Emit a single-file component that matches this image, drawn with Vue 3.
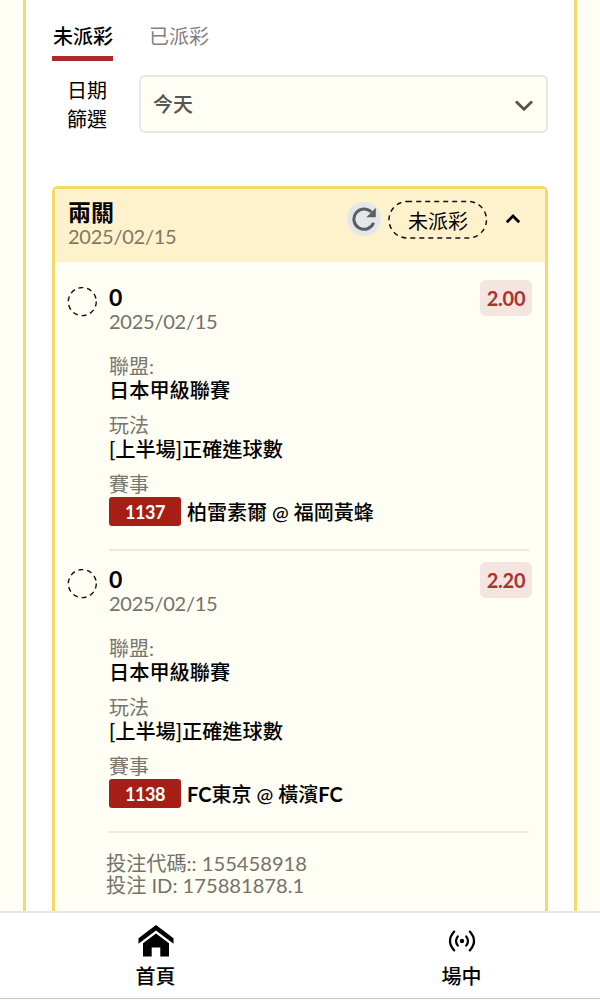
<script setup>
import { ref } from 'vue'

const tabs = ['未派彩', '已派彩']
const activeTab = ref(0)
const expanded = ref(true)

const bets = [
  {
    id: '1137',
    score: '0',
    date: '2025/02/15',
    league: '日本甲級聯賽',
    play: '[上半場]正確進球數',
    match: '柏雷素爾 @ 福岡黃蜂',
    odds: '2.00'
  },
  {
    id: '1138',
    score: '0',
    date: '2025/02/15',
    league: '日本甲級聯賽',
    play: '[上半場]正確進球數',
    match: 'FC東京 @ 橫濱FC',
    odds: '2.20'
  }
]

// odd entries are the latin runs, which need a heavier weight than the CJK text
function splitLatin(text) {
  return text.split(/([A-Z]+)/)
}
</script>

<template>
  <div class="page">
    <main class="content">
      <div class="panel">
        <div class="tabs">
          <button
            v-for="(tab, i) in tabs"
            :key="tab"
            class="tab"
            :class="{ active: activeTab === i }"
            @click="activeTab = i"
          >
            {{ tab }}
          </button>
        </div>

        <div class="filter">
          <div class="filter-label">日期<br />篩選</div>
          <div class="select">
            <span>今天</span>
            <svg width="18" height="12" viewBox="0 0 18 12">
              <path d="M1.8 2.2L9 9.2L16.2 2.2" />
            </svg>
          </div>
        </div>

        <section class="card">
          <header class="card-header">
            <div class="card-heading">
              <div class="card-title">兩關</div>
              <div class="date">2025/02/15</div>
            </div>
            <div class="refresh">
              <svg width="24" height="24" viewBox="0 0 24 24">
                <path class="arc" d="M21.6 15.8A10.2 10.2 0 1 1 19.4 5" />
                <path class="head" d="M23.8 0.8V10.2H14.4Z" />
              </svg>
            </div>
            <div class="status">
              <svg class="status-outline" width="100" height="40" viewBox="0 0 100 40">
                <rect x="1" y="1.5" width="97.5" height="36.5" rx="18.2" />
              </svg>
              <span>未派彩</span>
            </div>
            <button class="toggle" @click="expanded = !expanded">
              <svg width="16" height="12" viewBox="0 0 16 12">
                <path d="M1.8 9.3L8 3L14.2 9.3" />
              </svg>
            </button>
          </header>

          <div v-if="expanded" class="card-body">
            <div v-for="bet in bets" :key="bet.id" class="bet">
              <svg class="circle" width="30" height="30" viewBox="0 0 30 30">
                <circle cx="15.3" cy="14.6" r="14" />
              </svg>
              <div class="bet-info">
                <div class="score">{{ bet.score }}</div>
                <div class="date">{{ bet.date }}</div>
                <dl>
                  <dt>聯盟:</dt>
                  <dd>{{ bet.league }}</dd>
                  <dt>玩法</dt>
                  <dd>{{ bet.play }}</dd>
                  <dt>賽事</dt>
                  <dd class="match">
                    <span class="match-id">{{ bet.id }}</span>
                    <span class="match-name"
                      ><span
                        v-for="(part, i) in splitLatin(bet.match)"
                        :key="i"
                        :class="{ latin: i % 2 }"
                        >{{ part }}</span
                      ></span
                    >
                  </dd>
                </dl>
              </div>
              <div class="odds">{{ bet.odds }}</div>
            </div>
            <div class="codes">
              <div>投注代碼:: 155458918</div>
              <div>投注 ID: 175881878.1</div>
            </div>
          </div>
        </section>
      </div>
    </main>

    <nav class="bottom-nav">
      <a class="nav-item home">
        <svg width="36" height="32" viewBox="0 0 36 32">
          <path d="M0.5 13.2L18 0L35.5 13.2V18.8L18 5.6L0.5 18.8Z" />
          <path d="M5 18.3L18 8.6L31 18.3V31.5H22.3V22.5H13.7V31.5H5Z" />
        </svg>
        <span>首頁</span>
      </a>
      <a class="nav-item live">
        <svg width="28" height="32" viewBox="0 0 28 32">
          <circle cx="14" cy="16" r="2.2" />
          <path d="M9.8 11.4Q6.2 16 9.8 20.6M18.2 11.4Q21.8 16 18.2 20.6" />
          <path d="M6.2 6.6Q-2.2 16 6.2 25.4M21.8 6.6Q30.2 16 21.8 25.4" />
        </svg>
        <span>場中</span>
      </a>
    </nav>
  </div>
</template>

<style>
body {
  margin: 0;
  background: #fffef5;
}
</style>

<style scoped>
.page {
  display: flex;
  flex-direction: column;
  height: 1000px;
  overflow: hidden;
  box-sizing: border-box;
  background: #fffef5;
  color: #000;
  font-family: Lato, 'Noto Sans CJK TC', sans-serif;
  font-size: 20px;
  line-height: 24px;
}

button {
  padding: 0;
  border: none;
  background: none;
  font: inherit;
  color: inherit;
  cursor: pointer;
}

.content {
  height: 911px;
  padding: 0 23px;
  overflow: hidden;
}

.panel {
  box-sizing: border-box;
  height: 1000px;
  padding: 24px 26px 0;
  border: solid #f1db68;
  border-width: 0 3px;
  background: #fff;
}

.tabs {
  display: flex;
  gap: 35px;
}

.tab {
  height: 37px;
  padding: 0 0 8px 1px;
  box-sizing: border-box;
  border-bottom: 5px solid transparent;
  line-height: 24px;
  color: #808080;
}

.tab.active {
  border-color: #a92c28;
  color: #000;
  font-weight: 500;
}

.filter {
  display: flex;
  align-items: flex-start;
  margin-top: 14px;
}

.filter-label {
  width: 40px;
  margin: 1px 32px 0 15px;
  line-height: 29px;
}

.select {
  flex: 1;
  display: flex;
  align-items: center;
  justify-content: space-between;
  box-sizing: border-box;
  height: 58px;
  padding: 0 13px 0 12px;
  border: 2px solid #e8e9e3;
  border-radius: 6px;
  background: #fefef4;
  color: #555550;
  font-weight: 500;
}

.select svg {
  margin-top: 3px;
}

.select svg path,
.toggle svg path {
  fill: none;
  stroke: #555550;
  stroke-width: 2.8;
  stroke-linecap: round;
}

.card {
  height: 800px;
  margin-top: 52px;
  border: 3px solid #efdb65;
  border-radius: 6px;
  background: #fffef5;
}

.card-header {
  display: flex;
  align-items: flex-start;
  box-sizing: border-box;
  height: 73px;
  padding: 11px 24px 0 13px;
  background: #fef2cd;
}

.card-heading {
  flex: 1;
}

.card-title {
  font-size: 23px;
  font-weight: 700;
  line-height: 24px;
}

.date {
  letter-spacing: -0.24px;
  color: #73726b;
}

.card-header .date {
  color: #7f7862;
}

.refresh {
  display: flex;
  align-items: center;
  justify-content: center;
  width: 34px;
  height: 34px;
  margin: 2px 7px 0 0;
  border-radius: 50%;
  background: #e5e6e9;
}

.refresh .arc {
  fill: none;
  stroke: #5b5e62;
  stroke-width: 3;
}

.refresh .head {
  fill: #5b5e62;
}

.status {
  position: relative;
  width: 100px;
  height: 40px;
  line-height: 42px;
  text-align: center;
}

.status-outline {
  position: absolute;
  inset: 0;
  fill: none;
  stroke: #111;
  stroke-width: 1.5;
  stroke-dasharray: 5 4;
}

.toggle {
  display: flex;
  margin: 13px 0 0 17px;
}

.toggle svg path {
  stroke: #000;
  stroke-linecap: butt;
}

.card-body {
  padding: 0 14px 0 13px;
}

.bet {
  display: flex;
  align-items: flex-start;
  height: 282px;
  padding-top: 18px;
  box-sizing: border-box;
}

.circle {
  margin: 7px 12px 0 -1px;
  fill: none;
  stroke: #111;
  stroke-width: 1.4;
  stroke-dasharray: 5 3.8;
}

.bet-info {
  flex: 1;
  height: 271px;
  margin-right: -49px;
  box-sizing: border-box;
  border-bottom: 2px solid #e9e9e2;
}

.score {
  padding-top: 5px;
  font-size: 23px;
  font-weight: 700;
}

.bet-info .date {
  line-height: 25px;
}

dl {
  margin: 20px 0 0;
}

dt {
  color: #77766f;
}

dd {
  margin: 0 0 11px;
  font-size: 20.2px;
  font-weight: 500;
}

.match {
  display: flex;
  align-items: center;
  gap: 6px;
  margin-top: 1px;
}

.match-name {
  font-size: 20px;
}

.latin {
  font-weight: 700;
}

.match-id {
  width: 72px;
  height: 29px;
  border-radius: 3px;
  background: #a51f17;
  color: #fff;
  font-size: 18px;
  font-weight: 700;
  letter-spacing: -0.5px;
  line-height: 30px;
  text-align: center;
}

.odds {
  width: 52px;
  height: 36px;
  margin-right: -1px;
  border-radius: 6px;
  background: #f4e5e0;
  color: #ab332d;
  font-weight: 700;
  letter-spacing: -0.2px;
  line-height: 37px;
  text-align: center;
}

.codes {
  padding: 26px 0 0 38px;
  font-size: 20.15px;
  line-height: 22px;
  color: #73726b;
}

.bottom-nav {
  display: flex;
  box-sizing: border-box;
  height: 88px;
  border-top: 2px solid #e6e6e4;
  border-bottom: 1px solid #c9c9c9;
  background: #fff;
}

.nav-item {
  display: flex;
  flex-direction: column;
  flex-shrink: 0;
  align-items: center;
  width: 311px;
  padding-top: 12px;
  font-weight: 500;
}

.nav-item span {
  margin-top: 7px;
}

.live {
  width: 301px;
}

.live path {
  fill: none;
  stroke: #000;
  stroke-width: 2.2;
  stroke-linecap: round;
}
</style>
